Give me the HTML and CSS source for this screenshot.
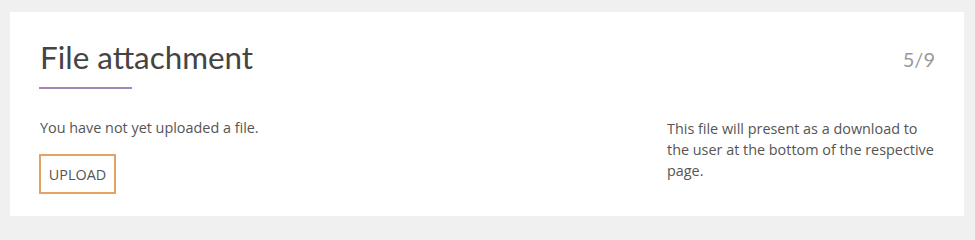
FILE: index.html
```html
<!DOCTYPE html>
<html>
<head>
<meta charset="utf-8">
<link rel="stylesheet" href="styles.css">
</head>
<body>
<div class="card">
  <div class="head">
    <div class="title-wrap">
      <h1 class="title">File attachment</h1>
      <div class="underline"></div>
    </div>
    <div class="step">5/9</div>
  </div>
  <div class="body">
    <div class="main">
      <p class="status">You have not yet uploaded a file.</p>
      <button class="upload">UPLOAD</button>
    </div>
    <p class="help">This file will present as a download to the user at the bottom of the respective page.</p>
  </div>
</div>
</body>
</html>
```

FILE: styles.css
```css
html, body {
  margin: 0;
  padding: 0;
  background: #f0f0f0;
}
body {
  padding: 12px 11px 8px 10px;
  font-family: "Open Sans", "Liberation Sans", sans-serif;
}
.card {
  background: #fff;
  height: 204px;
  box-sizing: border-box;
  padding: 27px 29px 0 29px;
}
.head {
  display: flex;
  justify-content: space-between;
  align-items: flex-start;
}
.title {
  margin: 0;
  font-family: Lato, "Open Sans", sans-serif;
  font-weight: 400;
  font-size: 31.4px;
  line-height: 36px;
  color: #444;
  padding-left: 1px;
}
.underline {
  width: 93px;
  height: 2px;
  background: #a584b9;
  margin-top: 12px;
}
.step {
  font-family: Lato, "Open Sans", sans-serif;
  font-size: 20px;
  color: #999;
  margin-top: 8px;
}
.body {
  display: flex;
  justify-content: space-between;
  margin-top: 29px;
}
.main {
  padding-left: 1px;
}
.status {
  margin: 0;
  font-size: 14.4px;
  line-height: 20px;
  color: #555;
}
.upload {
  margin-top: 16px;
  display: block;
  width: 77px;
  height: 40px;
  margin-left: -1px;
  background: #fff;
  border: 2px solid #e6a262;
  font-family: "Open Sans", "Liberation Sans", sans-serif;
  font-size: 14.4px;
  color: #555;
  padding: 0;
  cursor: pointer;
}
.help {
  margin: 0;
  width: 268px;
  font-size: 14.4px;
  line-height: 21px;
  color: #555;
}
```
